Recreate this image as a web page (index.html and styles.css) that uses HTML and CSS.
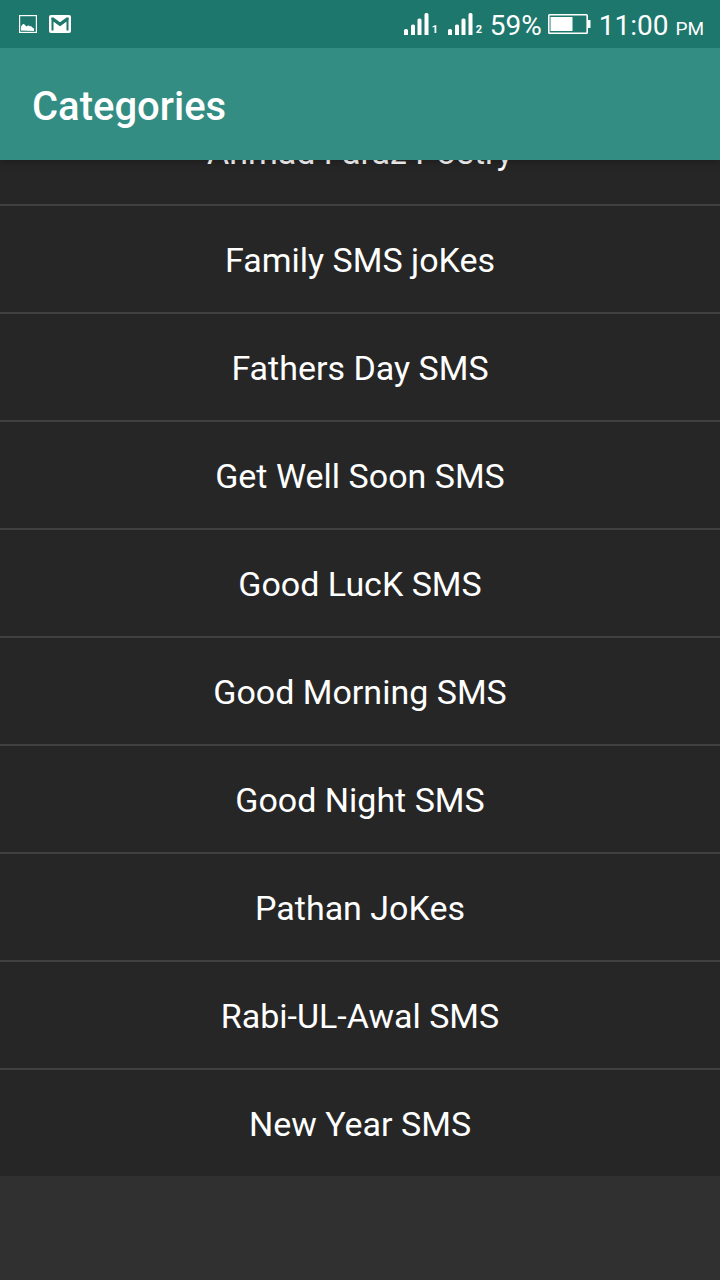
FILE: index.html
```html
<!DOCTYPE html>
<html lang="en">
<head>
<meta charset="utf-8">
<meta name="viewport" content="width=device-width, initial-scale=1">
<title>Categories</title>
<link rel="stylesheet" href="styles.css">
</head>
<body>
<div class="screen">
  <div class="status">
    <div class="notices">
      <svg class="notice-icon" width="18" height="18" viewBox="0 0 18 18" role="img" aria-label="Screenshot">
        <rect x=".6" y=".6" width="16.8" height="16.8" fill="none" stroke="#fff" stroke-width="1.2"/>
        <path d="M2 15.500V11.500l2-2.500h1l1.500 1.500 1 1 1.500-1 1 0 1 1 1-.500 1.500 1.500 1.500 1v2.500z" fill="#fff"/>
      </svg>
      <svg class="notice-icon" width="22" height="18" viewBox="0 0 22 18" role="img" aria-label="Gmail">
        <rect width="22" height="18" rx="2" fill="#fff"/>
        <path d="M3.500 15.500V4.500L11 10l7.500-5.500v11" fill="none" stroke="#1e776d" stroke-width="2"/>
        <path d="M2.500 2.500h2L11 7.200l6.500-4.700h2V5L11 11 2.500 5z" fill="#1e776d"/>
      </svg>
    </div>
    <div class="system">
      <span class="signal">
        <svg width="25" height="22" viewBox="0 0 25 22" aria-hidden="true">
          <path d="M0 17.500q0-1.500 1.500-1.500h1q1.500 0 1.500 1.500v4.500H0zM7 13q0-1.500 1.500-1.500h1q1.500 0 1.500 1.500v9H7zM13.500 7q0-1.500 1.500-1.500h1q1.500 0 1.500 1.500v15h-4zM20.500 1.500Q20.500 0 22 0h1q1.500 0 1.500 1.500V22h-4z" fill="#fff"/>
        </svg><span class="sim">1</span>
      </span>
      <span class="signal">
        <svg width="25" height="22" viewBox="0 0 25 22" aria-hidden="true">
          <path d="M0 17.500q0-1.500 1.500-1.500h1q1.500 0 1.500 1.500v4.500H0zM7 13q0-1.500 1.500-1.500h1q1.500 0 1.500 1.500v9H7zM13.500 7q0-1.500 1.500-1.500h1q1.500 0 1.500 1.500v15h-4zM20.500 1.500Q20.500 0 22 0h1q1.500 0 1.500 1.500V22h-4z" fill="#fff"/>
        </svg><span class="sim">2</span>
      </span>
      <span class="percent">59%</span>
      <svg class="battery" width="43" height="20" viewBox="0 0 43 20" role="img" aria-label="Battery">
        <rect x=".8" y=".8" width="38.400" height="18.400" rx=".8" fill="none" stroke="#fff" stroke-width="1.600"/>
        <rect x="2.500" y="3" width="22" height="14" fill="#fff"/>
        <rect x="39.500" y="6" width="3" height="8" fill="#fff"/>
      </svg>
      <span class="clock">11:00 <span class="period">PM</span></span>
    </div>
  </div>
  <header class="appbar"><h1 class="title">Categories</h1></header>
  <main class="content">
    <ul class="list">
      <li class="item"><a class="link" href="#ahmad-faraz">Ahmad Faraz Poetry</a></li>
      <li class="item"><a class="link" href="#family">Family SMS joKes</a></li>
      <li class="item"><a class="link" href="#fathers-day">Fathers Day SMS</a></li>
      <li class="item"><a class="link" href="#get-well">Get Well Soon SMS</a></li>
      <li class="item"><a class="link" href="#good-luck">Good LucK SMS</a></li>
      <li class="item"><a class="link" href="#good-morning">Good Morning SMS</a></li>
      <li class="item"><a class="link" href="#good-night">Good Night SMS</a></li>
      <li class="item"><a class="link" href="#pathan">Pathan JoKes</a></li>
      <li class="item"><a class="link" href="#rabi-ul-awal">Rabi-UL-Awal SMS</a></li>
      <li class="item"><a class="link" href="#new-year">New Year SMS</a></li>
    </ul>
  </main>
</div>
</body>
</html>
```
FILE: styles.css
```css
* {
  box-sizing: border-box;
}

body {
  margin: 0;
  background: #303030;
  color: #fff;
  font-family: Roboto, "Noto Sans", sans-serif;
}

.screen {
  display: flex;
  flex-direction: column;
  height: 100vh;
  overflow: hidden;
}

.status {
  position: relative;
  z-index: 2;
  flex: none;
  display: flex;
  align-items: center;
  justify-content: space-between;
  height: 48px;
  padding: 0 16px 0 19px;
  background: #1e776d;
}

.notices {
  display: flex;
  gap: 12px;
}

.notice-icon,
.battery {
  display: block;
}

.system {
  display: flex;
  align-items: center;
  font-size: 28px;
  line-height: 32px;
}

.signal {
  display: flex;
  align-items: flex-end;
  gap: 3px;
  width: 44px;
}

.signal + .signal {
  width: 42px;
}

.sim {
  font-size: 11px;
  font-weight: 700;
  line-height: 10px;
}

.percent,
.clock {
  padding-top: 3px;
}

.percent {
  margin-right: 6px;
}

.battery {
  margin-right: 8px;
}

.period {
  font-size: 19px;
  line-height: 20px;
}

.appbar {
  position: relative;
  z-index: 1;
  flex: none;
  display: flex;
  align-items: center;
  height: 112px;
  padding: 6px 32px 0;
  background: #338d83;
  box-shadow: 0 2px 8px rgba(0, 0, 0, 0.25);
}

.title {
  margin: 0;
  font-size: 40px;
  font-weight: 500;
  line-height: 48px;
}

/* The list rests at the end of its scroll range. */
.content {
  flex: 1;
  display: flex;
  flex-direction: column;
  justify-content: flex-end;
  min-height: 0;
  padding-bottom: 104px;
}

.list {
  flex: none;
  margin: 0;
  padding: 0;
  list-style: none;
  background: #262626;
}

.item + .item {
  border-top: 2px solid #404040;
}

.link {
  display: block;
  padding: 34px 16px 32px;
  color: #fff;
  font-size: 34px;
  line-height: 40px;
  text-align: center;
  text-decoration: none;
}
```
